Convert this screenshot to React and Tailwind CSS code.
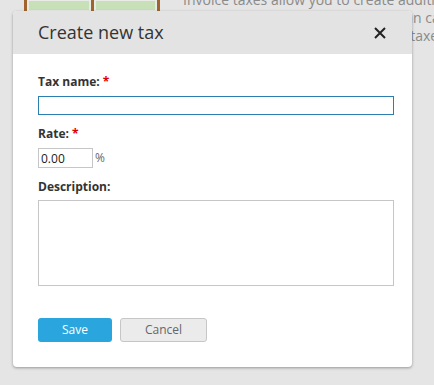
import React from 'react';

const App = () => {
  return (
    <div className="relative w-[434px] h-[385px] overflow-hidden bg-[#e5e5e5] font-['Open_Sans',sans-serif]">
      {/* Page behind the dialog */}
      <div className="flex gap-[23px] pl-[24px] -mt-[6px]">
        <div className="w-[136px] h-[17px] bg-[#a0652e] px-[3px] flex gap-[3px] shrink-0">
          <div className="flex-1 bg-[#e9ece6] flex flex-col justify-end px-[2px] pb-[1px]">
            <div className="h-[9px] bg-[#c8e0b8]" />
          </div>
          <div className="flex-1 bg-[#e9ece6] flex flex-col justify-end px-[2px] pb-[1px]">
            <div className="h-[9px] bg-[#c8e0b8]" />
          </div>
        </div>
        <div className="text-[14px] leading-[18px] text-[#8a8a8a] whitespace-nowrap -mt-[3px]">
          <p>Invoice taxes allow you to create additi</p>
          <p>Lorem ipsum dolor sit amet, you can ca</p>
          <p>Additional taxes, and multiple sale taxe</p>
        </div>
      </div>

      {/* Dialog */}
      <div className="absolute left-[13px] top-[11px] w-[399px] h-[356px] bg-white rounded-[4px] overflow-hidden shadow-[0_1px_3px_rgba(0,0,0,0.35)]">
        <div className="h-[43px] bg-[#e3e3e3] flex items-center justify-between pl-[25px] pr-[26px]">
          <h2 className="text-[18px] text-[#333]">Create new tax</h2>
          <svg width="12" height="12" viewBox="0 0 12 12" className="mt-[1px]">
            <path d="M1 1 L11 11 M11 1 L1 11" stroke="#222" strokeWidth="2" />
          </svg>
        </div>
        <div className="px-[25px] pt-[19px]">
          <label className="block text-[12px] font-bold text-[#333] leading-[18px]">
            Tax name: <span className="text-[#d00]">*</span>
          </label>
          <input className="block mt-[5px] w-[356px] h-[19px] border border-[#2a7fb0] outline-none" />
          <label className="block mt-[10px] text-[12px] font-bold text-[#333] leading-[18px]">
            Rate: <span className="text-[#d00]">*</span>
          </label>
          <div className="flex items-center mt-[5px]">
            <input
              defaultValue="0.00"
              className="w-[55px] h-[20px] border border-[#c6c6c6] px-[2px] text-[12px] text-[#222] outline-none"
            />
            <span className="ml-[2px] text-[12px] text-[#666]">%</span>
          </div>
          <label className="block mt-[10px] text-[12px] font-bold text-[#333] leading-[18px]">
            Description:
          </label>
          <textarea className="block mt-[4px] w-[356px] h-[86px] border border-[#c6c6c6] resize-none outline-none" />
          <div className="flex gap-[8px] mt-[32px]">
            <button className="w-[74px] h-[24px] rounded-[3px] bg-[#2ba5dd] text-white text-[12px]">
              Save
            </button>
            <button className="w-[87px] h-[24px] rounded-[3px] bg-[#ebebeb] border border-[#c6c6c6] text-[#666] text-[12px]">
              Cancel
            </button>
          </div>
        </div>
      </div>
    </div>
  );
};

export default App;
